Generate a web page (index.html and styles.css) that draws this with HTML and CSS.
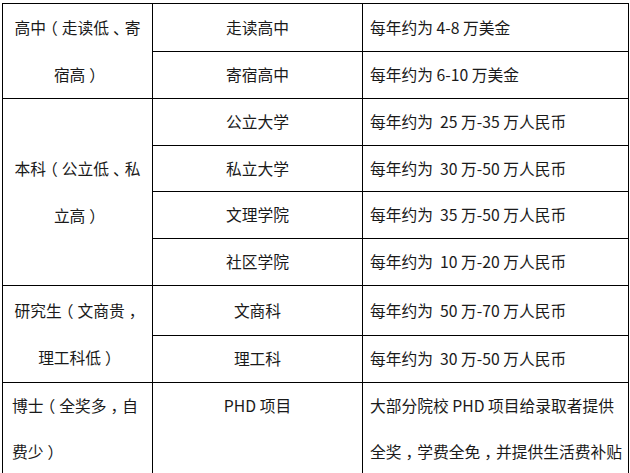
FILE: index.html
```html
<!DOCTYPE html>
<html lang="zh-CN">
<head>
<meta charset="utf-8">
<title>留学费用</title>
<link rel="stylesheet" href="styles.css">
</head>
<body>
<table class="fees">
  <colgroup><col class="c1"><col class="c2"><col class="c3"></colgroup>
  <tr class="h47">
    <td rowspan="2" class="cat"><span>高中</span><span class="pc">（</span><span>走读低</span><span class="pc">、</span><span>寄</span><span>宿高</span><span class="pc">）</span></td>
    <td class="type">走读高中</td>
    <td class="cost">每年约为 4-8 万美金</td>
  </tr>
  <tr class="h46">
    <td class="type">寄宿高中</td>
    <td class="cost">每年约为 6-10 万美金</td>
  </tr>
  <tr class="h47">
    <td rowspan="4" class="cat"><span>本科</span><span class="pc">（</span><span>公立低</span><span class="pc">、</span><span>私</span><span>立高</span><span class="pc">）</span></td>
    <td class="type">公立大学</td>
    <td class="cost">每年约为&nbsp; 25 万-35 万人民币</td>
  </tr>
  <tr class="h46">
    <td class="type">私立大学</td>
    <td class="cost">每年约为&nbsp; 30 万-50 万人民币</td>
  </tr>
  <tr class="h47">
    <td class="type">文理学院</td>
    <td class="cost">每年约为&nbsp; 35 万-50 万人民币</td>
  </tr>
  <tr class="h47">
    <td class="type">社区学院</td>
    <td class="cost">每年约为&nbsp; 10 万-20 万人民币</td>
  </tr>
  <tr class="h50">
    <td rowspan="2" class="cat"><span>研究生</span><span class="pc">（</span><span>文商贵</span><span class="pc">，</span><span>理工科低</span><span class="pc">）</span></td>
    <td class="type">文商科</td>
    <td class="cost">每年约为&nbsp; 50 万-70 万人民币</td>
  </tr>
  <tr class="h47">
    <td class="type">理工科</td>
    <td class="cost">每年约为&nbsp; 30 万-50 万人民币</td>
  </tr>
  <tr class="h95 top">
    <td class="cat left"><span>博士</span><span class="pc">（</span><span>全奖多</span><span class="pc">，</span><span>自</span><span>费少</span><span class="pc">）</span></td>
    <td class="type">PHD 项目</td>
    <td class="cost"><span>大部分院校 PHD 项目给录取者提供</span><span>全奖</span><span class="pc">，</span><span>学费全免</span><span class="pc">，</span><span>并提供生活费补贴</span></td>
  </tr>
</table>
</body>
</html>
```
FILE: styles.css
```css
html, body {
  margin: 0;
  padding: 0;
  background: #ffffff;
}

body {
  font-family: "Noto Sans CJK SC", "Noto Sans", sans-serif;
  font-size: 15.75px;
  color: #1a1a1a;
}

.fees {
  border-collapse: collapse;
  table-layout: fixed;
  width: 626px;
  margin: 3px 0 0 2px;
}

.c1 { width: 150px; }
.c2 { width: 210px; }
.c3 { width: 266px; }

.fees td {
  border: 1px solid #000000;
  padding: 0 9px;
  line-height: 30px;
  vertical-align: middle;
}

.fees .cat { text-align: center; line-height: 47px; }
.fees .cat.left { text-align: left; }
.fees .type { text-align: center; }
.fees .cost { text-align: left; padding: 0 3px 0 7px; }

.fees .top td { vertical-align: top; line-height: 45.5px; }

.pc {
  font-feature-settings: "halt" 1;
  padding: 0 0.25em;
}

.h46 { height: 46px; }
.h47 { height: 47px; }
.h50 { height: 50px; }
.h95 { height: 95px; }
```
